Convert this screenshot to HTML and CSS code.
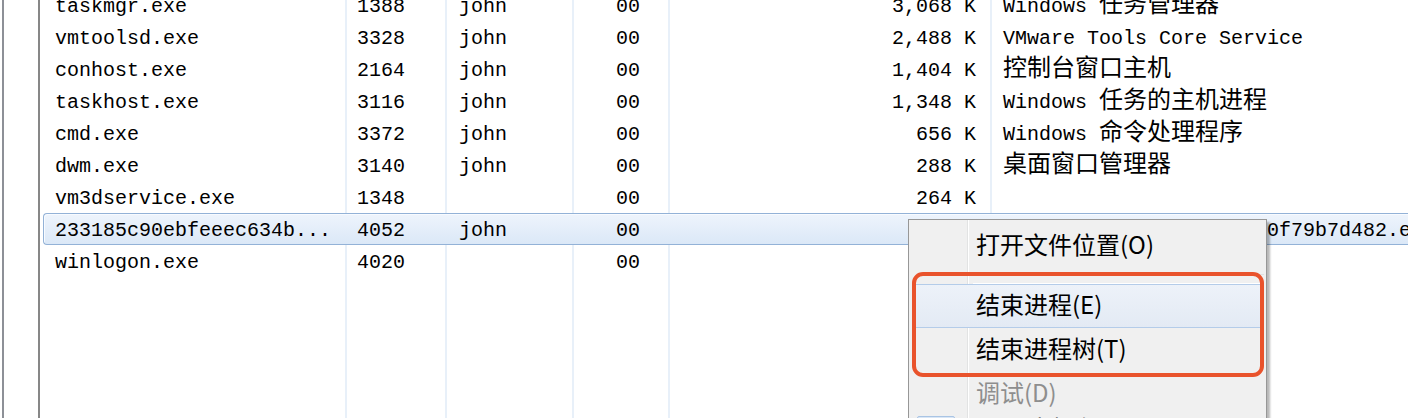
FILE: index.html
```html
<!DOCTYPE html>
<html lang="zh-CN">
<head>
<meta charset="utf-8">
<title>任务管理器 - 进程</title>
<link rel="stylesheet" href="styles.css">
</head>
<body>
<div class="screen">
  <div class="side"></div>
  <div class="list">
    <div class="rows">
      <div class="row"><span class="c name">taskmgr.exe</span><span class="c pid">1388</span><span class="c user">john</span><span class="c cpu">00</span><span class="c mem">3,068 K</span><span class="c desc">Windows <span class="cjk">任务管理器</span></span></div>
      <div class="row"><span class="c name">vmtoolsd.exe</span><span class="c pid">3328</span><span class="c user">john</span><span class="c cpu">00</span><span class="c mem">2,488 K</span><span class="c desc">VMware Tools Core Service</span></div>
      <div class="row"><span class="c name">conhost.exe</span><span class="c pid">2164</span><span class="c user">john</span><span class="c cpu">00</span><span class="c mem">1,404 K</span><span class="c desc"><span class="cjk">控制台窗口主机</span></span></div>
      <div class="row"><span class="c name">taskhost.exe</span><span class="c pid">3116</span><span class="c user">john</span><span class="c cpu">00</span><span class="c mem">1,348 K</span><span class="c desc">Windows <span class="cjk">任务的主机进程</span></span></div>
      <div class="row"><span class="c name">cmd.exe</span><span class="c pid">3372</span><span class="c user">john</span><span class="c cpu">00</span><span class="c mem">656 K</span><span class="c desc">Windows <span class="cjk">命令处理程序</span></span></div>
      <div class="row"><span class="c name">dwm.exe</span><span class="c pid">3140</span><span class="c user">john</span><span class="c cpu">00</span><span class="c mem">288 K</span><span class="c desc"><span class="cjk">桌面窗口管理器</span></span></div>
      <div class="row"><span class="c name">vm3dservice.exe</span><span class="c pid">1348</span><span class="c user"></span><span class="c cpu">00</span><span class="c mem">264 K</span><span class="c desc"></span></div>
      <div class="row sel"><span class="c name">233185c90ebfeeec634b...</span><span class="c pid">4052</span><span class="c user">john</span><span class="c cpu">00</span><span class="c mem">556 K</span><span class="c desc">233185c90ebfeeec634b6a0f79b7d482.exe</span></div>
      <div class="row"><span class="c name">winlogon.exe</span><span class="c pid">4020</span><span class="c user"></span><span class="c cpu">00</span><span class="c mem">948 K</span><span class="c desc"></span></div>
    </div>
    <div class="row filler"><span class="c name"></span><span class="c pid"></span><span class="c user"></span><span class="c cpu"></span><span class="c mem"></span><span class="c desc"></span></div>
  </div>

  <div class="menu">
    <div class="mi first">打开文件位置(O)</div>
    <div class="msep"></div>
    <div class="mi hover">结束进程(E)</div>
    <div class="mi">结束进程树(T)</div>
    <div class="mi disabled">调试(D)</div>
    <div class="mi withicon"><span class="micon"></span>UAC 虚拟化(V)</div>
    <div class="mark"></div>
  </div>
</div>
</body>
</html>
```

FILE: styles.css
```css
html, body {
  margin: 0;
  padding: 0;
  background: #ffffff;
}

.screen {
  position: relative;
  display: flex;
  width: 1408px;
  height: 418px;
  overflow: hidden;
  background: #ffffff;
}

.side {
  flex: none;
  width: 34px;
  margin-left: 2px;
  border-left: 2px solid #8d9097;
}

.list {
  flex: 1 1 auto;
  min-width: 0;
  display: flex;
  flex-direction: column;
  border-left: 2px solid #878787;
}

.rows {
  flex: none;
  margin-top: -11px;
}

.row {
  display: flex;
  height: 32px;
  box-sizing: border-box;
}

.c {
  flex: none;
  box-sizing: border-box;
  border-right: 2px solid #e8f0f9;
  white-space: nowrap;
  overflow: hidden;
  font-family: "Liberation Mono", "Noto Sans CJK SC", monospace;
  font-size: 20px;
  line-height: 36px;
  color: #000000;
}

.name { width: 307px; padding-left: 15px; }
.pid { width: 100px; padding-left: 10px; }
.user { width: 127px; padding-left: 12px; }
.cpu { width: 96px; text-align: right; padding-right: 28px; }
.mem { width: 322px; text-align: right; padding-right: 14px; }
.desc { flex: 1 1 auto; min-width: 0; border-right: none; padding-left: 11px; }

.cjk {
  font-family: "Noto Sans CJK SC", sans-serif;
  font-size: 24px;
  line-height: 1;
}

.row.sel {
  margin-left: 3px;
  border: 1px solid #93b2d7;
  border-right: none;
  border-radius: 4px 0 0 4px;
  background: linear-gradient(#eef4fc, #dbe8f7);
  box-shadow: inset 1px 1px 0 #f8fbff;
}

.row.sel .c {
  border-right-color: transparent;
  line-height: 34px;
}

.row.sel .name { width: 303px; padding-left: 11px; }

.row.filler {
  flex: 1 1 auto;
  height: auto;
}

/* context menu */
.menu {
  position: absolute;
  left: 908px;
  top: 219px;
  width: 359px;
  height: 260px;
  box-sizing: border-box;
  padding: 2px 2px;
  border: 1px solid #979797;
  background: linear-gradient(to right, #f0f0f0 58px, #e2e3e3 58px, #e2e3e3 59px, #ffffff 59px, #ffffff 60px, #f0f0f0 60px);
  box-shadow: 3px 3px 2px rgba(0, 0, 0, 0.28);
  font-family: "Noto Sans CJK SC", sans-serif;
  font-size: 24px;
  color: #000000;
}

.mi {
  display: flex;
  align-items: center;
  height: 44px;
  box-sizing: border-box;
  padding-left: 65px;
  padding-bottom: 4px;
  line-height: 1;
  white-space: nowrap;
}

.mi.first {
  padding-bottom: 0;
}

.msep {
  height: 18px;
  box-sizing: border-box;
  margin-left: 62px;
  border-bottom: 1px solid #ffffff;
  background: linear-gradient(transparent 8px, #e0e0e0 8px, #e0e0e0 9px, transparent 9px);
}

.mi.hover {
  margin: 0 2px;
  padding-left: 63px;
  border-top: 1px solid #b4cce9;
  border-bottom: 1px solid #b4cce9;
  background: linear-gradient(#edf2f9, #e3eaf4);
}

.mi.disabled {
  color: #8e8e8e;
}

.mi.withicon {
  align-items: flex-start;
  padding-left: 6px;
}

.micon {
  flex: none;
  width: 38px;
  height: 36px;
  margin-right: 21px;
  box-sizing: border-box;
  border: 1px solid #a9c4e4;
  border-radius: 2px;
  background: #d9e6f5;
}

.mark {
  position: absolute;
  left: 3px;
  top: 52px;
  width: 352px;
  height: 105px;
  box-sizing: border-box;
  border: 4px solid #e9532c;
  border-radius: 11px;
}
```
